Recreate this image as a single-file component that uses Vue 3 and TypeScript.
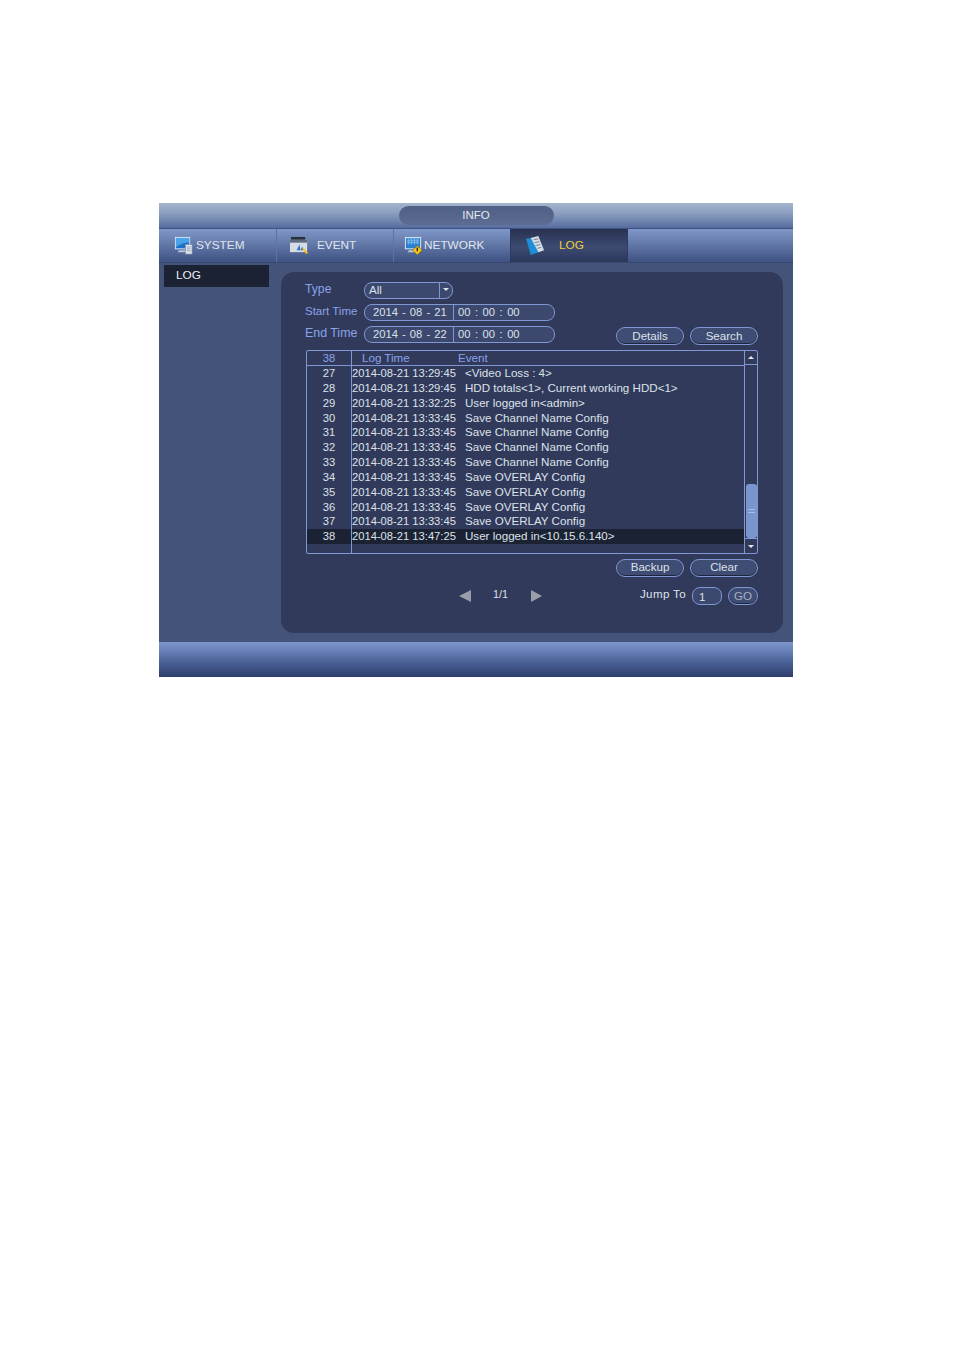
<script setup lang="ts">
const tabs = [
  { id: 'system', label: 'SYSTEM' },
  { id: 'event', label: 'EVENT' },
  { id: 'network', label: 'NETWORK' },
  { id: 'log', label: 'LOG' },
]
const rows: [number, string, string][] = [
  [27, '2014-08-21 13:29:45', '<Video Loss : 4>'],
  [28, '2014-08-21 13:29:45', 'HDD totals<1>, Current working HDD<1>'],
  [29, '2014-08-21 13:32:25', 'User logged in<admin>'],
  [30, '2014-08-21 13:33:45', 'Save Channel Name Config'],
  [31, '2014-08-21 13:33:45', 'Save Channel Name Config'],
  [32, '2014-08-21 13:33:45', 'Save Channel Name Config'],
  [33, '2014-08-21 13:33:45', 'Save Channel Name Config'],
  [34, '2014-08-21 13:33:45', 'Save OVERLAY Config'],
  [35, '2014-08-21 13:33:45', 'Save OVERLAY Config'],
  [36, '2014-08-21 13:33:45', 'Save OVERLAY Config'],
  [37, '2014-08-21 13:33:45', 'Save OVERLAY Config'],
  [38, '2014-08-21 13:47:25', 'User logged in<10.15.6.140>'],
]
</script>

<template>
  <div class="page">
    <div class="window">
      <header class="title"><div class="title-pill">INFO</div></header>
      <nav class="tabs">
        <div v-for="t in tabs" :key="t.id" class="tab" :class="'tab-' + t.id">
          <svg v-if="t.id === 'system'" class="icon" viewBox="0 0 20 20">
            <rect x="1" y="1" width="16" height="13" fill="#dfe8f4" />
            <rect x="2" y="2" width="14" height="11" fill="#1d6fc9" />
            <path d="M2 2h14v5C11 6 6 9 2 12z" fill="#4aa3e8" />
            <path d="M5 15h8v2H4z" fill="#b9c6d8" />
            <rect x="12" y="9" width="7" height="10" fill="#dfe6ee" stroke="#7f8ea6" stroke-width=".7" />
            <path d="M13.5 11.5h4M13.5 13.5h4M13.5 15.500h4" stroke="#8294ad" stroke-width=".8" />
          </svg>
          <svg v-else-if="t.id === 'event'" class="icon" viewBox="0 0 20 20">
            <rect x="1" y="1" width="15" height="5" fill="#27303f" />
            <rect x="0" y="4" width="18" height="13" fill="#d5dce6" />
            <rect x="0" y="4" width="18" height="3" fill="#5e6a7c" />
            <path d="M7 15l3-6 1 6zM11 15l2-4 1 4z" fill="#2f74c8" />
            <path d="M14 12l5 6-2 1-4-5z" fill="#f2c21a" />
          </svg>
          <svg v-else-if="t.id === 'network'" class="icon" viewBox="0 0 20 20">
            <rect x="1" y="1" width="17" height="13" fill="#dfe8f4" />
            <rect x="2" y="2" width="15" height="11" fill="#2a7fd0" />
            <path d="M3 3h13M3 5h13M3 7h13M5 3v6M8 3v6M11 3v6M14 3v6" stroke="#9ccbee" stroke-width=".7" />
            <path d="M5 15h8v2H4z" fill="#b9c6d8" />
            <path d="M14 10l5 5-5 5-5-5z" fill="#f5c518" stroke="#5a4a10" stroke-width=".5" />
            <path d="M14 12v4" stroke="#222" stroke-width="1.400" />
          </svg>
          <svg v-else class="icon" viewBox="0 0 20 20">
            <path d="M0 3l6-1 7 15-8 3z" fill="#1c8fd6" />
            <path d="M5 2l8-2 6 15-6 2z" fill="#d6dde6" />
            <path d="M8 4l5-1M9 7l5-1M10 10l5-1M12 13l4-1" stroke="#6d7f98" stroke-width="1" />
          </svg>
          <span class="tab-label">{{ t.label }}</span>
        </div>
      </nav>
      <div class="body">
        <aside class="side"><div class="side-item">LOG</div></aside>
        <main class="panel">
          <div class="filter">
            <div class="form">
              <div class="form-row">
                <label class="label label-type">Type</label>
                <div class="field select"><span class="select-val">All</span><span class="select-btn"></span></div>
              </div>
              <div class="form-row">
                <label class="label">Start Time</label>
                <div class="field datetime"><span class="seg-date">2014 - 08 - 21</span><span class="seg-time">00 : 00 : 00</span></div>
              </div>
              <div class="form-row">
                <label class="label label-end">End Time</label>
                <div class="field datetime"><span class="seg-date">2014 - 08 - 22</span><span class="seg-time">00 : 00 : 00</span></div>
              </div>
            </div>
            <div class="btns filter-btns"><button class="btn">Details</button><button class="btn">Search</button></div>
          </div>

          <div class="table">
            <div class="table-main">
              <div class="thead">
                <div class="c-no">38</div>
                <div class="c-head"><span class="h-time">Log Time</span><span class="h-event">Event</span></div>
              </div>
              <div v-for="r in rows" :key="r[0]" class="tr" :class="{ selected: r[0] === 38 }">
                <div class="c-no">{{ r[0] }}</div>
                <div class="c-time">{{ r[1] }}</div>
                <div class="c-event">{{ r[2] }}</div>
              </div>
              <div class="tr filler"><div class="c-no"></div></div>
            </div>
            <div class="scroll">
              <div class="sc-btn"><span class="tri-up"></span></div>
              <div class="sc-track"><div class="sc-thumb"><i></i><i></i></div></div>
              <div class="sc-btn sc-down"><span class="tri-down"></span></div>
            </div>
          </div>

          <div class="btns actions"><button class="btn">Backup</button><button class="btn">Clear</button></div>

          <div class="pager">
            <span class="arrow-left"></span>
            <span class="page-no">1/1</span>
            <span class="arrow-right"></span>
            <span class="jump">Jump To</span>
            <div class="field jump-input">1</div>
            <button class="btn go">GO</button>
          </div>
        </main>
      </div>
      <footer class="foot"></footer>
    </div>
  </div>
</template>

<style>
html, body { margin: 0; background: #fff; }
</style>

<style scoped>
.page {
  box-sizing: border-box;
  width: 953px;
  height: 1348px;
  padding: 203px 0 0 159px;
  background: #fff;
  font-family: "Liberation Sans", Arial, sans-serif;
  font-size: 11.600px;
  color: #dde2ea;
}
.window { width: 634px; height: 474px; display: flex; flex-direction: column; background: #435379; }
.title {
  height: 26px;
  flex: none;
  display: flex;
  justify-content: center;
  align-items: flex-start;
  padding-top: 3px;
  box-sizing: border-box;
  background: linear-gradient(#a5b4cc, #8c9fc0 40%, #566c9e);
  border-bottom: 1px solid #3f5283;
}
.title-pill {
  width: 155px;
  height: 19px;
  border-radius: 10px;
  background: linear-gradient(#4f5f85, #5c6c92);
  text-align: center;
  line-height: 18px;
  font-size: 11.500px;
  color: #e4e8ef;
}
.tabs {
  height: 34px;
  flex: none;
  display: flex;
  background: linear-gradient(#7f98c9, #6379a8 45%, #3e5283);
  border-bottom: 1px solid #37476f;
  box-sizing: border-box;
}
.tab {
  width: 117px;
  display: flex;
  align-items: center;
  box-sizing: border-box;
  border-right: 1px solid #5d73a3;
  font-size: 11.800px;
  color: #e0e5ee;
}
.tab-label { margin-bottom: 2px; }
.icon { width: 19px; height: 19px; flex: none; }
.tab-system { width: 118px; padding-left: 15px; }
.tab-system .icon { margin-right: 3px; }
.tab-event { padding-left: 13px; }
.tab-event .icon { margin-right: 8px; }
.tab-network { padding-left: 10px; border-right: 1px solid #2c3a63; }
.tab-network .icon { margin-right: 1px; }
.tab-log {
  padding-left: 15px;
  color: #f0cc3c;
  background: linear-gradient(#28324f, #3d4b73 55%, #2c3758);
  border-right: 1px solid #2c3a63;
}
.tab-log .icon { margin-right: 14px; }
.body { flex: 1; display: flex; min-height: 0; }
.side { width: 122px; flex: none; padding: 2px 0 0 5px; box-sizing: border-box; }
.side-item {
  width: 105px;
  height: 22px;
  background: #1a2233;
  line-height: 21px;
  padding-left: 12px;
  box-sizing: border-box;
  font-size: 11.800px;
  color: #eef0f4;
}
.panel {
  width: 502px;
  height: 361px;
  margin-top: 9px;
  box-sizing: border-box;
  padding: 10px 25px 0;
  border-radius: 13px;
  background: #313a5a;
}
.filter { display: flex; justify-content: space-between; align-items: flex-end; }
.filter-btns { margin-bottom: -2px; }
.form { display: flex; flex-direction: column; gap: 5px; }
.form-row { display: flex; align-items: center; height: 17px; }
.label { width: 59px; margin: 0 0 4px -1px; flex: none; color: #8aa3ea; font-size: 11.500px; white-space: nowrap; }
.label-type { font-size: 12.200px; }
.label-end { font-size: 12.400px; }
.field {
  box-sizing: border-box;
  height: 17px;
  border: 1px solid #7f98d4;
  border-radius: 8px;
  background: #3c486e;
  display: flex;
  align-items: center;
  font-size: 11.200px;
  line-height: 15px;
}
.select { width: 89px; padding-left: 4px; justify-content: space-between; font-size: 11.600px; }
.select-val { margin-bottom: 2px; }
.select-btn {
  width: 12px;
  height: 100%;
  border-left: 1px solid #7f98d4;
  position: relative;
}
.select-btn::after {
  content: "";
  position: absolute;
  left: 3px;
  top: 5px;
  border: 3px solid transparent;
  border-top: 3px solid #dde2ea;
  border-bottom: 0;
}
.datetime { width: 191px; }
.seg-date {
  width: 89px;
  height: 100%;
  flex: none;
  box-sizing: border-box;
  padding-left: 8px;
  border-right: 1px solid #7f98d4;
  word-spacing: 1px;
  white-space: nowrap;
}
.seg-time { padding-left: 4px; word-spacing: 1.400px; white-space: nowrap; }
.btns { display: flex; gap: 6px; justify-content: flex-end; }
.btn {
  box-sizing: border-box;
  width: 68px;
  height: 18px;
  padding: 0;
  border: 1px solid #7f98d4;
  border-radius: 9px;
  background: #3f4c73;
  box-shadow: inset 0 -1px 0 #1d2540;
  font: 11.600px/14px "Liberation Sans", Arial, sans-serif;
  color: #dde2ea;
}
.table {
  height: 204px;
  margin-top: 7px;
  box-sizing: border-box;
  border: 1px solid #7f98d4;
  border-radius: 2px;
  display: flex;
}
.table-main { flex: 1; min-width: 0; display: flex; flex-direction: column; }
.thead {
  height: 15px;
  flex: none;
  box-sizing: border-box;
  display: flex;
  border-bottom: 1px solid #7f98d4;
  color: #8aa3ea;
  line-height: 14px;
}
.c-no {
  width: 45px;
  flex: none;
  box-sizing: border-box;
  border-right: 1px solid #7f98d4;
  text-align: center;
  font-size: 11.200px;
}
.c-head { display: flex; padding-left: 10px; }
.h-time { width: 96px; }
.tr { height: 14.850px; flex: none; display: flex; line-height: 14.850px; white-space: nowrap; }
.tr.selected { background: #1a2233; }
.tr.filler { flex: 1; height: auto; }
.c-time { width: 113px; flex: none; font-size: 11.200px; padding-left: 0; }
.c-event { font-size: 11.600px; }
.scroll {
  width: 12px;
  flex: none;
  display: flex;
  flex-direction: column;
  border-left: 1px solid #7f98d4;
}
.sc-btn { height: 14px; flex: none; display: flex; align-items: center; justify-content: center; border-bottom: 1px solid #7f98d4; box-sizing: border-box; }
.sc-down { height: 15px; border-bottom: 0; border-top: 1px solid #7f98d4; }
.tri-up { border: 3px solid transparent; border-bottom: 3px solid #e6e9ef; border-top: 0; }
.tri-down { border: 3px solid transparent; border-top: 3px solid #e6e9ef; border-bottom: 0; }
.sc-track { flex: 1; display: flex; flex-direction: column; justify-content: flex-end; }
.sc-thumb {
  height: 54px;
  margin-left: 1px;
  border-radius: 3px;
  background: #7a96cf;
  display: flex;
  flex-direction: column;
  align-items: center;
  justify-content: center;
  gap: 2px;
}
.sc-thumb i { width: 7px; height: 1px; background: #a9bde2; }
.actions { margin-top: 5px; }
.actions .btn { padding-bottom: 2px; }
.pager { display: flex; align-items: center; height: 18px; margin-top: 10px; padding-left: 153px; }
.arrow-left { border: 6.500px solid transparent; border-right: 12px solid #9a9ea8; border-left: 0; margin-bottom: 1px; }
.arrow-right { border: 6.500px solid transparent; border-left: 11px solid #9a9ea8; border-right: 0; margin: 0 0 1px 24px; }
.page-no { margin: 0 0 4px 22px; width: 14px; font-size: 10.800px; }
.jump { margin: 0 6px 5px auto; font-size: 11.600px; letter-spacing: .35px; }
.jump-input { width: 30px; height: 18px; padding-left: 6px; margin-right: 6px; font-size: 11.600px; }
.go { width: 30px; height: 18px; color: #a9b1c2; }
.foot {
  height: 35px;
  flex: none;
  background: linear-gradient(#7c96c9, #6c86bd 20%, #445a8f 65%, #2f3f6c);
}
</style>
